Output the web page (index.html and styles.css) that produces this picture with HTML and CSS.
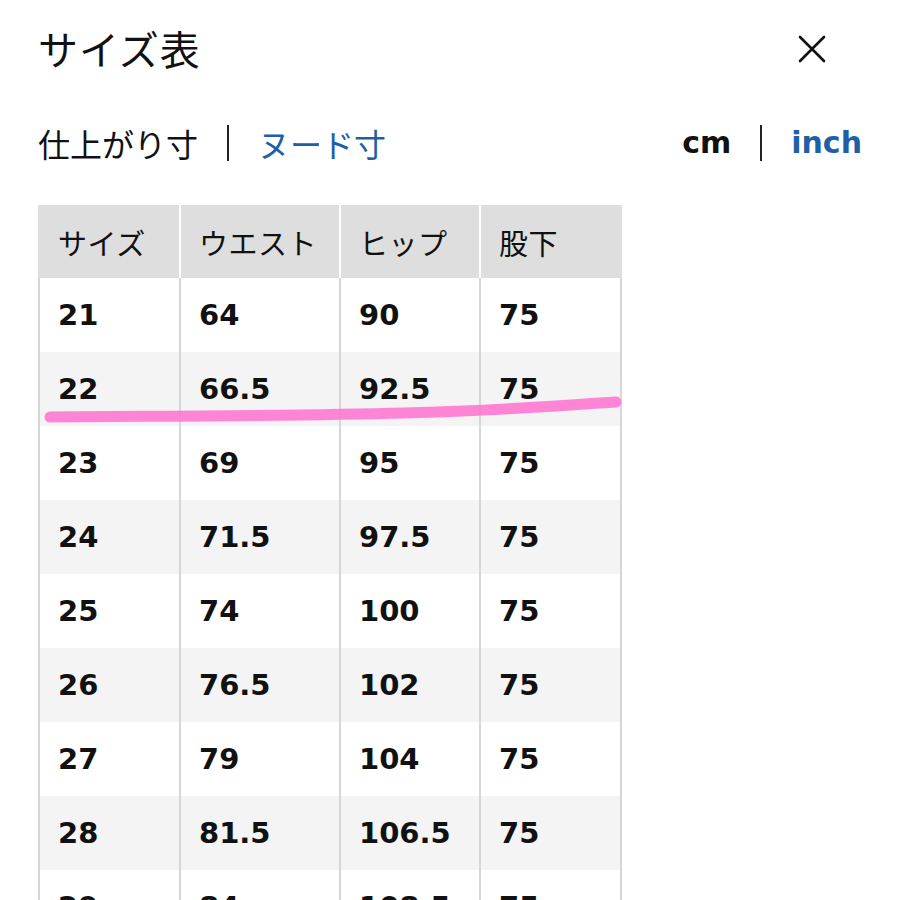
FILE: index.html
```html
<!DOCTYPE html>
<html lang="ja">
<head>
<meta charset="utf-8">
<link rel="stylesheet" href="styles.css">
</head>
<body>
<div class="page">
  <div class="topbar">
    <h1 class="title">サイズ表</h1>
    <svg class="close" width="28" height="28" viewBox="0 0 28 28"><path d="M2 2 L26 26 M26 2 L2 26" stroke="#111" stroke-width="2.6" stroke-linecap="round" fill="none"/></svg>
  </div>
  <div class="tabs">
    <div class="tabgroup jp">
      <span class="active">仕上がり寸</span>
      <span class="sep"></span>
      <span class="link">ヌード寸</span>
    </div>
    <div class="tabgroup units">
      <span class="active">cm</span>
      <span class="sep"></span>
      <span class="link">inch</span>
    </div>
  </div>
  <div class="tablewrap">
    <table class="size">
      <colgroup><col class="c1"><col class="c2"><col class="c3"><col class="c4"></colgroup>
      <thead>
        <tr><th>サイズ</th><th>ウエスト</th><th>ヒップ</th><th>股下</th></tr>
      </thead>
      <tbody>
        <tr><td>21</td><td>64</td><td>90</td><td>75</td></tr>
        <tr><td>22</td><td>66.5</td><td>92.5</td><td>75</td></tr>
        <tr><td>23</td><td>69</td><td>95</td><td>75</td></tr>
        <tr><td>24</td><td>71.5</td><td>97.5</td><td>75</td></tr>
        <tr><td>25</td><td>74</td><td>100</td><td>75</td></tr>
        <tr><td>26</td><td>76.5</td><td>102</td><td>75</td></tr>
        <tr><td>27</td><td>79</td><td>104</td><td>75</td></tr>
        <tr><td>28</td><td>81.5</td><td>106.5</td><td>75</td></tr>
        <tr><td>29</td><td>84</td><td>108.5</td><td>75</td></tr>
      </tbody>
    </table>
    <svg class="marker" width="580" height="30" viewBox="0 0 580 30"><path d="M6 22 C 120 21, 250 21, 360 18 S 520 10, 572 7" stroke="#ff78d2" stroke-opacity="0.9" stroke-width="11" stroke-linecap="round" fill="none"/></svg>
  </div>
</div>
</body>
</html>
```
FILE: styles.css
```css
html, body {
  margin: 0;
  padding: 0;
  background: #fff;
  overflow: hidden;
  height: 900px;
}
.page {
  padding: 0 38px;
  color: #111;
  font-family: "Noto Sans CJK JP", "Liberation Sans", sans-serif;
}
.topbar {
  display: flex;
  justify-content: space-between;
  align-items: flex-start;
  padding-top: 24px;
  height: 48px;
}
.title {
  margin: 0;
  font-size: 40px;
  line-height: 48px;
  font-weight: 400;
  letter-spacing: 1px;
}
.close {
  margin-top: 11px;
  margin-right: 36px;
}
.tabs {
  display: flex;
  justify-content: space-between;
  align-items: center;
  margin-top: 50px;
  height: 42px;
}
.tabgroup {
  display: flex;
  align-items: center;
}
.jp {
  font-size: 32px;
  line-height: 40px;
}
.jp .sep {
  margin: 0 29px 0 29px;
}
.units {
  font-family: "DejaVu Sans", "Liberation Sans", sans-serif;
  font-weight: 700;
  font-size: 30px;
  line-height: 40px;
}
.units .sep {
  margin: 0 29px 0 29px;
}
.sep {
  display: inline-block;
  width: 2px;
  height: 36px;
  background: #222;
}
.link {
  color: #1f5fa6;
}
.tablewrap {
  position: relative;
  margin-top: 41px;
  width: 582px;
}
.size {
  border-collapse: collapse;
  table-layout: fixed;
  width: 582px;
}
.c1 { width: 141px; }
.c2 { width: 160px; }
.c3 { width: 140px; }
.c4 { width: 141px; }
.size th {
  height: 73px;
  background: #dedede;
  font-weight: 400;
  font-size: 29px;
  text-align: left;
  padding: 0 0 0 18px;
  border-left: 2px solid #fff;
  letter-spacing: 0.5px;
}
.size th:first-child {
  border-left: 2px solid #dedede;
}
.size th:last-child {
  border-right: 2px solid #dedede;
}
.size td {
  height: 74px;
  padding: 0 0 0 18px;
  border-left: 2px solid #d6d6d6;
  font-family: "DejaVu Sans", "Liberation Sans", sans-serif;
  font-weight: 700;
  font-size: 29px;
  color: #111;
}
.size td:last-child {
  border-right: 2px solid #d6d6d6;
}
.size tbody tr:nth-child(even) td {
  background: #f4f4f4;
}
.marker {
  position: absolute;
  left: 6px;
  top: 190px;
  pointer-events: none;
}
```
